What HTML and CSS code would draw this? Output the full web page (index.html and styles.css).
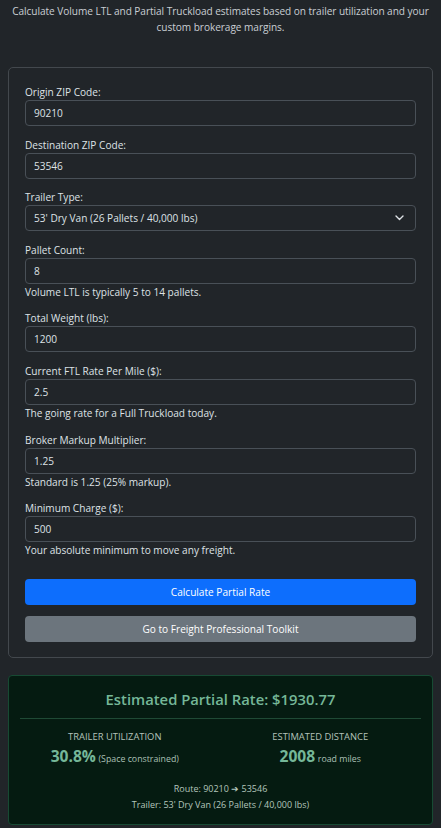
FILE: index.html
```html
<!DOCTYPE html>
<html lang="en">
<head>
<meta charset="utf-8">
<title>Partial Truckload Calculator</title>
<link rel="stylesheet" href="styles.css">
</head>
<body>
<main class="page">
  <p class="intro">Calculate Volume LTL and Partial Truckload estimates based on trailer utilization and your custom brokerage margins.</p>

  <form class="card">
    <div class="field">
      <label class="label">Origin ZIP Code:</label>
      <div class="control">90210</div>
    </div>
    <div class="field">
      <label class="label">Destination ZIP Code:</label>
      <div class="control">53546</div>
    </div>
    <div class="field">
      <label class="label">Trailer Type:</label>
      <div class="control select">
        <span>53' Dry Van (26 Pallets / 40,000 lbs)</span>
        <svg class="chevron" width="9" height="6" viewBox="0 0 9 6"><path d="M1 1l3.5 3.5L8 1" fill="none" stroke="#dee2e6" stroke-width="1.4" stroke-linecap="round" stroke-linejoin="round"/></svg>
      </div>
    </div>
    <div class="field">
      <label class="label">Pallet Count:</label>
      <div class="control">8</div>
      <div class="help">Volume LTL is typically 5 to 14 pallets.</div>
    </div>
    <div class="field">
      <label class="label">Total Weight (lbs):</label>
      <div class="control">1200</div>
    </div>
    <div class="field">
      <label class="label">Current FTL Rate Per Mile ($):</label>
      <div class="control">2.5</div>
      <div class="help">The going rate for a Full Truckload today.</div>
    </div>
    <div class="field">
      <label class="label">Broker Markup Multiplier:</label>
      <div class="control">1.25</div>
      <div class="help">Standard is 1.25 (25% markup).</div>
    </div>
    <div class="field">
      <label class="label">Minimum Charge ($):</label>
      <div class="control">500</div>
      <div class="help">Your absolute minimum to move any freight.</div>
    </div>
    <div class="actions">
      <button type="button" class="btn btn-primary">Calculate Partial Rate</button>
      <button type="button" class="btn btn-secondary">Go to Freight Professional Toolkit</button>
    </div>
  </form>

  <section class="result">
    <h2 class="result-title">Estimated Partial Rate: $1930.77</h2>
    <hr class="result-rule">
    <div class="stats">
      <div class="stat">
        <div class="stat-label">TRAILER UTILIZATION</div>
        <div class="stat-value"><strong>30.8%</strong> <small>(Space constrained)</small></div>
      </div>
      <div class="stat">
        <div class="stat-label">ESTIMATED DISTANCE</div>
        <div class="stat-value"><strong>2008</strong> <small>road miles</small></div>
      </div>
    </div>
    <div class="meta">
      <div>Route: 90210 ➔ 53546</div>
      <div>Trailer: 53' Dry Van (26 Pallets / 40,000 lbs)</div>
    </div>
  </section>
</main>
</body>
</html>
```

FILE: styles.css
```css
* { box-sizing: border-box; }

html, body {
  margin: 0;
  background: #212529;
}

body {
  color: #dee2e6;
  font-family: "Open Sans", "Noto Sans", sans-serif;
  font-size: 10.1px;
  line-height: 16px;
}

.page {
  padding: 3px 8px 0;
}

.intro {
  margin: 0 0 32px;
  text-align: center;
  color: #c9ced3;
  letter-spacing: -0.05px;
}

.card {
  display: flex;
  flex-direction: column;
  border: 1px solid #43484d;
  border-radius: 5px;
  padding: 16px 16px 15px;
}

.field {
  display: flex;
  flex-direction: column;
  margin-bottom: 10.6px;
}

.label {
  display: block;
  height: 16px;
}

.control {
  display: flex;
  align-items: center;
  height: 26px;
  padding: 0 8px;
  border: 1px solid #495057;
  border-radius: 4px;
  background: #212529;
  color: #dee2e6;
}

.select {
  justify-content: space-between;
  padding-right: 11px;
}

.chevron { display: block; }

.help {
  height: 16px;
}

.actions {
  display: flex;
  flex-direction: column;
  gap: 11px;
  margin-top: 10px;
}

.btn {
  height: 26px;
  border: 0;
  border-radius: 4px;
  font: inherit;
  color: #fff;
  padding: 0;
}

.btn-primary { background: #0d6efd; }
.btn-secondary { background: #6c757d; }

.result {
  margin-top: 17px;
  border: 1px solid #174a33;
  border-radius: 4px;
  background: #051b11;
  padding: 13px 11px 11px;
  color: #75b798;
}

.result-title {
  margin: 0;
  text-align: center;
  font-size: 14.8px;
  line-height: 20px;
  font-weight: 600;
}

.result-rule {
  margin: 9px 0 11px;
  border: 0;
  border-top: 1px solid #1f4a35;
}

.stats {
  display: grid;
  grid-template-columns: 1fr 1fr;
  margin: 0 -2px 0 -8px;
}

.stat {
  text-align: center;
}

.stat-label {
  font-size: 9.4px;
  line-height: 14px;
  color: #b4c3bb;
}

.stat-value {
  line-height: 24px;
}

.stat-value strong {
  font-size: 15.6px;
  font-weight: 700;
}

.stat-value small {
  font-size: 8.8px;
  color: #abc0b5;
}

.meta {
  margin-top: 10px;
  text-align: center;
  font-size: 9px;
  line-height: 16px;
  color: #b4c6bc;
}
```
